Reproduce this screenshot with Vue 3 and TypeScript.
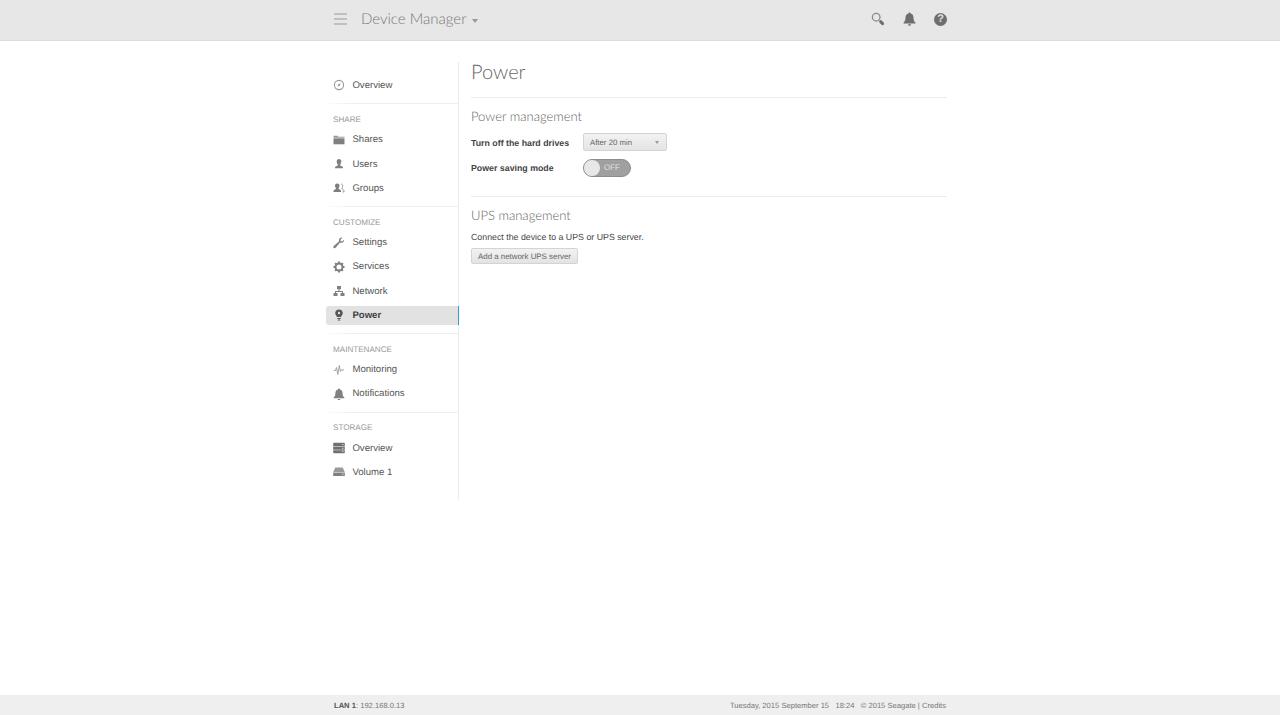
<script setup lang="ts">
interface Item { label: string; icon: string; active?: boolean }
interface Group { title?: string; items: Item[] }
const groups: Group[] = [
  { items: [{ label: 'Overview', icon: 'clock' }] },
  { title: 'SHARE', items: [
    { label: 'Shares', icon: 'folder' },
    { label: 'Users', icon: 'user' },
    { label: 'Groups', icon: 'group' },
  ] },
  { title: 'CUSTOMIZE', items: [
    { label: 'Settings', icon: 'wrench' },
    { label: 'Services', icon: 'gear' },
    { label: 'Network', icon: 'network' },
    { label: 'Power', icon: 'bulb', active: true },
  ] },
  { title: 'MAINTENANCE', items: [
    { label: 'Monitoring', icon: 'pulse' },
    { label: 'Notifications', icon: 'bell' },
  ] },
  { title: 'STORAGE', items: [
    { label: 'Overview', icon: 'stack' },
    { label: 'Volume 1', icon: 'drive' },
  ] },
]
</script>

<template>
  <div class="page">
    <header class="topbar">
      <div class="wrap topbar-inner">
        <svg class="burger" width="13" height="12" viewBox="0 0 13 12"><path d="M0 1h13M0 6h13M0 11h13" stroke="#999" stroke-width="1.1" fill="none"/></svg>
        <span class="app-title">Device Manager</span>
        <span class="caret"></span>
        <div class="top-icons">
          <svg width="14" height="14" viewBox="0 0 14 14"><circle cx="5.2" cy="5.2" r="3.8" fill="none" stroke="#8a8a8a" stroke-width="1.3"/><path d="M9.600 9.600l2 2" stroke="#6e6e6e" stroke-width="3" stroke-linecap="round"/></svg>
          <svg width="13" height="14" viewBox="0 0 13 14"><path d="M6.5 0.6c.7 0 1.1.5 1.1 1 2 .5 2.9 2.1 2.9 4.2 0 2.4.7 3.6 2 4.9v.9H.5v-.9c1.3-1.3 2-2.5 2-4.9 0-2.1.9-3.700 2.900-4.200 0-.5.4-1 1.100-1z" fill="#6e6e6e"/><path d="M5 12.300h3a1.500 1.500 0 0 1-3 0z" fill="#6e6e6e"/></svg>
          <span class="help">?</span>
        </div>
      </div>
    </header>

    <div class="wrap body">
      <nav class="sidebar">
        <section v-for="(g, gi) in groups" :key="gi" class="group" :class="{ first: gi === 0 }">
          <div v-if="g.title" class="group-title">{{ g.title }}</div>
          <a v-for="it in g.items" :key="it.label + gi" class="nav-item" :class="{ active: it.active }">
            <svg class="nav-icon" width="12" height="12" viewBox="0 0 12 12">
              <template v-if="it.icon === 'clock'">
                <circle cx="6" cy="6" r="4.600" fill="none" stroke="#999" stroke-width="1.100"/>
                <path d="M4.500 7.500L6.800 6.800 7.600 4.400 5.300 5.200z" fill="#999"/>
              </template>
              <template v-else-if="it.icon === 'folder'">
                <path d="M0.500 1.800h4l.8 1h6.200v1H.5z" fill="#999"/>
                <path d="M.5 4.300h11v6H.5z" fill="#808080"/>
              </template>
              <path v-else-if="it.icon === 'user'" d="M6 1c1.500 0 2.300 1.100 2.300 2.500S7.600 6 7.200 6.500v.9c1.400.5 2.800 1 2.800 2.100v.8H2v-.8c0-1.100 1.400-1.600 2.800-2.100v-.9C4.400 6 3.700 5 3.700 3.500S4.500 1 6 1z" fill="#808080"/>
              <template v-else-if="it.icon === 'group'">
                <path d="M4.500 1.500c1.300 0 2 1 2 2.200s-.6 2.200-1 2.600v.8c1.200.4 2.500.9 2.500 1.900v.9H.5V9c0-1 1.300-1.500 2.500-1.900v-.8c-.4-.4-1-1.400-1-2.600s.7-2.200 2-2.200z" fill="#808080"/>
                <path d="M8 2c1.200.2 1.700 1.100 1.700 2.100 0 .9-.4 1.800-.8 2.200v.7c1 .4 2.100.8 2.100 1.700v1.200H9.500" fill="none" stroke="#999" stroke-width="1"/>
              </template>
              <path v-else-if="it.icon === 'wrench'" d="M11.300 2.400L9.100 4.400 7.700 4.100 7.400 2.800 9.400.7C7.700.2 6 1.400 5.900 3.100c0 .5.100.9.200 1.200L.8 9c-.6.600-.6 1.400-.1 1.900s1.400.5 1.900-.1l4.500-5.200c1.900.7 4.300-.8 4.200-3.200z" fill="#808080"/>
              <template v-else-if="it.icon === 'gear'">
                <circle cx="6" cy="6" r="3.500" fill="none" stroke="#808080" stroke-width="2"/>
                <path d="M6 .5v2M6 9.500v2M.5 6h2M9.500 6h2M2.100 2.100l1.400 1.400M8.500 8.500l1.400 1.400M9.900 2.100L8.500 3.500M3.500 8.500L2.100 9.900" stroke="#808080" stroke-width="2"/>
              </template>
              <path v-else-if="it.icon === 'network'" d="M4 1h4v3.200H6.500v1.800h3.500v2h1.500v3h-4V8H9V7H3v1h1.500v3h-4V8H2V6h3.500V4.200H4z" fill="#808080"/>
              <template v-else-if="it.icon === 'bulb'">
                <path d="M6 .5c2.200 0 3.800 1.500 3.800 3.600 0 1.700-1.300 2.500-1.800 4H4c-.5-1.500-1.800-2.300-1.800-4C2.200 2 3.800.5 6 .5z" fill="#555"/>
                <path d="M4.300 9h3.400v1H4.300zM4.800 10.500h2.400v1H4.800z" fill="#555"/>
                <circle cx="6" cy="4" r="1.200" fill="#ddd"/>
              </template>
              <path v-else-if="it.icon === 'pulse'" d="M1 6.500h1.500l1-3 1.300 7L6.300 1.500l1.200 6 .8-1.500H11" fill="none" stroke="#999" stroke-width=".9"/>
              <path v-else-if="it.icon === 'bell'" d="M6 .5c.6 0 1 .4 1 .9 1.800.5 2.600 1.900 2.600 3.800 0 2.100.6 3.200 1.800 4.300v.8H.6v-.8c1.200-1.100 1.800-2.200 1.800-4.300 0-1.900.8-3.300 2.600-3.800 0-.5.4-.9 1-.9zM4.700 11h2.600a1.300 1.300 0 0 1-2.600 0z" fill="#808080"/>
              <template v-else-if="it.icon === 'stack'">
                <path d="M1 .8h10a.8.800 0 0 1 .8.8v2.900H.2V1.600A.8.800 0 0 1 1 .8zM.2 5h11.600v2.700H.2zM.2 8.200h11.600v2.300a.8.800 0 0 1-.8.800H1a.8.800 0 0 1-.8-.8z" fill="#707070"/>
                <path d="M9 2.500h1.500M9 6.300h1.500M9 9.600h1.500" stroke="#ccc" stroke-width="1"/>
              </template>
              <template v-else>
                <path d="M2.300 1.500h7.400l2 4.500H.3z" fill="#999"/>
                <path d="M.2 6.500h11.600V10H.2z" fill="#808080"/>
                <path d="M9 8.200h1.500" stroke="#ddd" stroke-width="1"/>
              </template>
            </svg>
            <span>{{ it.label }}</span>
          </a>
        </section>
      </nav>

      <main class="content">
        <h1 class="page-title">Power</h1>
        <section class="panel first-panel">
          <h2>Power management</h2>
          <div class="field field-select">
            <label>Turn off the hard drives</label>
            <div class="select"><span>After 20 min</span><i></i></div>
          </div>
          <div class="field field-toggle">
            <label>Power saving mode</label>
            <div class="toggle"><span class="knob"></span><span class="off">OFF</span></div>
          </div>
        </section>
        <section class="panel">
          <h2>UPS management</h2>
          <p>Connect the device to a UPS or UPS server.</p>
          <button class="btn" type="button">Add a network UPS server</button>
        </section>
      </main>
    </div>

    <footer class="footer">
      <div class="wrap footer-inner">
        <span><b>LAN 1</b>: 192.168.0.13</span>
        <span class="footer-right">Tuesday, 2015 September 15&nbsp;&nbsp; 18:24&nbsp;&nbsp; © 2015 Seagate | Credits</span>
      </div>
    </footer>
  </div>
</template>

<style>
html, body { margin: 0; background: #fff; }
</style>

<style scoped>
.page {
  height: 715px;
  display: flex;
  flex-direction: column;
  font-family: "Liberation Sans", Arial, sans-serif;
  color: #444;
  overflow: hidden;
  text-rendering: geometricPrecision;
}
.wrap { width: 621px; margin-left: 326px; box-sizing: border-box; }

.topbar { height: 41px; flex: none; background: #e7e7e7; border-bottom: 1px solid #dcdcdc; box-sizing: border-box; }
.topbar-inner { display: flex; align-items: center; height: 38px; padding-left: 8px; }
.burger { margin-right: 14px; }
.app-title { font-family: Lato, sans-serif; font-weight: 300; font-size: 15px; color: #777; }
.caret { margin: 3px 0 0 6px; border: 3px solid transparent; border-top: 4px solid #999; border-bottom: 0; }
.top-icons { margin-left: auto; display: flex; align-items: center; gap: 18px; }
.help { width: 13px; height: 13px; border-radius: 50%; background: #6e6e6e; color: #e6e6e6; font-size: 11px; font-weight: bold; line-height: 13px; text-align: center; }

.body { flex: 1; display: flex; align-items: flex-start; padding-top: 21px; }
.sidebar { width: 133px; height: 438px; flex: none; border-right: 1px solid #ececec; box-sizing: border-box; padding-top: 11px; }
.group { padding: 8px 0 5.500px; border-bottom: 1px solid #f0f0f0; border-image: linear-gradient(to right, transparent, #eee 20%) 1; }
.group.first { padding: 0 0 6px; }
.group:last-child { border-bottom: 0; }
.group-title { font-size: 8.100px; line-height: 10px; color: #999; padding-left: 7px; margin: 2.500px 0 3px; }
.nav-item { display: flex; align-items: center; height: 24.250px; padding-left: 7px; font-size: 9.600px; color: #555; box-sizing: border-box; }
.nav-icon { margin-right: 7.400px; flex: none; }
.nav-item.active { background: #e2e2e2; font-weight: bold; color: #444; margin-right: -1px; border-right: 1.500px solid #2e9fd6; border-radius: 3px 0 0 3px; height: 19px; margin-top: 2.500px; margin-bottom: 2.750px; }

.content { flex: 1; padding-left: 12px; min-width: 0; }
.page-title { margin: 0; font-family: Lato, sans-serif; font-weight: 300; font-size: 20px; line-height: 20px; color: #666; height: 35px; border-bottom: 1px solid #ececec; }
.panel h2 { margin: 0; font-family: Lato, sans-serif; font-weight: 300; font-size: 13px; line-height: 17px; color: #666; }
.first-panel { padding-top: 10px; height: 88px; border-bottom: 1px solid #ececec; margin-bottom: 10px; }
.field { display: flex; align-items: center; margin-top: 8px; height: 18px; }
.field-select label { padding-top: 1px; }
.field label { width: 112px; font-size: 8.800px; font-weight: bold; color: #444; }
.select { width: 84px; height: 18px; box-sizing: border-box; display: flex; align-items: center; justify-content: space-between; padding: 0 7px 0 6px; background: linear-gradient(#f2f2f2, #e4e4e4); border: 1px solid #d4d4d4; border-radius: 2px; font-size: 7.800px; color: #666; }
.select i { border: 2px solid transparent; border-top: 3px solid #999; border-bottom: 0; margin-top: 1px; }
.toggle { position: relative; width: 48px; height: 18px; box-sizing: border-box; border-radius: 9px; background: #a0a0a0; border: 1px solid #8c8c8c; }
.knob { position: absolute; left: 0; top: 0; width: 16px; height: 16px; border-radius: 50%; background: #e8e8e8; }
.off { position: absolute; left: 20px; top: 0; line-height: 16px; font-size: 8px; color: #e0e0e0; }
.panel p { margin: 7px 0 0; font-size: 8.800px; line-height: 12px; color: #444; }
.btn { display: block; margin: 5px 0 0; width: 107px; height: 16px; padding: 0; background: linear-gradient(#f2f2f2, #e3e3e3); border: 1px solid #d4d4d4; border-radius: 2px; font-family: "Liberation Sans", Arial, sans-serif; font-size: 7.900px; color: #666; text-rendering: geometricPrecision; }

.footer { height: 20px; flex: none; background: #efefef; }
.footer-inner { display: flex; align-items: center; justify-content: space-between; height: 20px; padding: 0 1px 0 8px; font-size: 7.600px; color: #777; }
.footer b { color: #555; }
</style>
